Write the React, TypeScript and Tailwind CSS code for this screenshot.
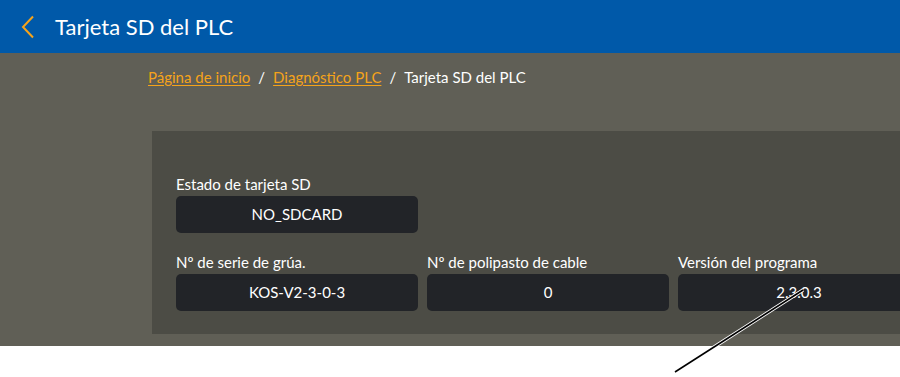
import React from 'react';

const FIELDS_ROW = [
  { label: 'Nº de serie de grúa.', value: 'KOS-V2-3-0-3' },
  { label: 'Nº de polipasto de cable', value: '0' },
  { label: 'Versión del programa', value: '2.3.0.3' },
];

function Field({ label, value }: { label: string; value: string }) {
  return (
    <div className="flex flex-col w-[242px] shrink-0">
      <span className="text-[15px] leading-[20px] text-white mb-[2px]">{label}</span>
      <div className="h-[37px] rounded-[5px] bg-[#222428] flex items-center justify-center text-[15px] text-white">
        {value}
      </div>
    </div>
  );
}

export default function App() {
  return (
    <div
      className="relative w-[900px] h-[377px] overflow-hidden bg-white"
      style={{ fontFamily: '"Source Sans Pro", Lato, "Noto Sans", sans-serif' }}
    >
      <header className="h-[53px] bg-[#0059a9] flex items-center pl-[21px]">
        <svg width="14" height="24" viewBox="0 0 14 24" className="mr-[20px]">
          <path d="M12 1.5 L2 12 L12 22.5" fill="none" stroke="#f5a31a" strokeWidth="2" />
        </svg>
        <h1 className="text-[22px] text-white leading-none">Tarjeta SD del PLC</h1>
      </header>

      <main className="bg-[#605f56] h-[293px] pl-[152px]">
        <nav className="h-[50px] flex items-center -ml-[4px] text-[15px] text-white pb-[2px]">
          <a className="text-[#f5a31a] underline underline-offset-2">Página de inicio</a>
          <span className="mx-[8px]">/</span>
          <a className="text-[#f5a31a] underline underline-offset-2">Diagnóstico PLC</a>
          <span className="mx-[8px]">/</span>
          <span>Tarjeta SD del PLC</span>
        </nav>

        <section className="mt-[28px] bg-[#4c4c45] h-[203px] pl-[24px] pt-[43px]">
          <Field label="Estado de tarjeta SD" value="NO_SDCARD" />
          <div className="flex gap-[9px] mt-[19px]">
            {FIELDS_ROW.map((f) => (
              <Field key={f.label} label={f.label} value={f.value} />
            ))}
          </div>
        </section>
      </main>

      <svg className="absolute inset-0 pointer-events-none" width="900" height="377">
        <line x1="675" y1="372" x2="803" y2="290" stroke="#ffffff" strokeWidth="3.5" />
        <line x1="675" y1="372" x2="803" y2="290" stroke="#000000" strokeWidth="1.6" />
      </svg>
    </div>
  );
}
